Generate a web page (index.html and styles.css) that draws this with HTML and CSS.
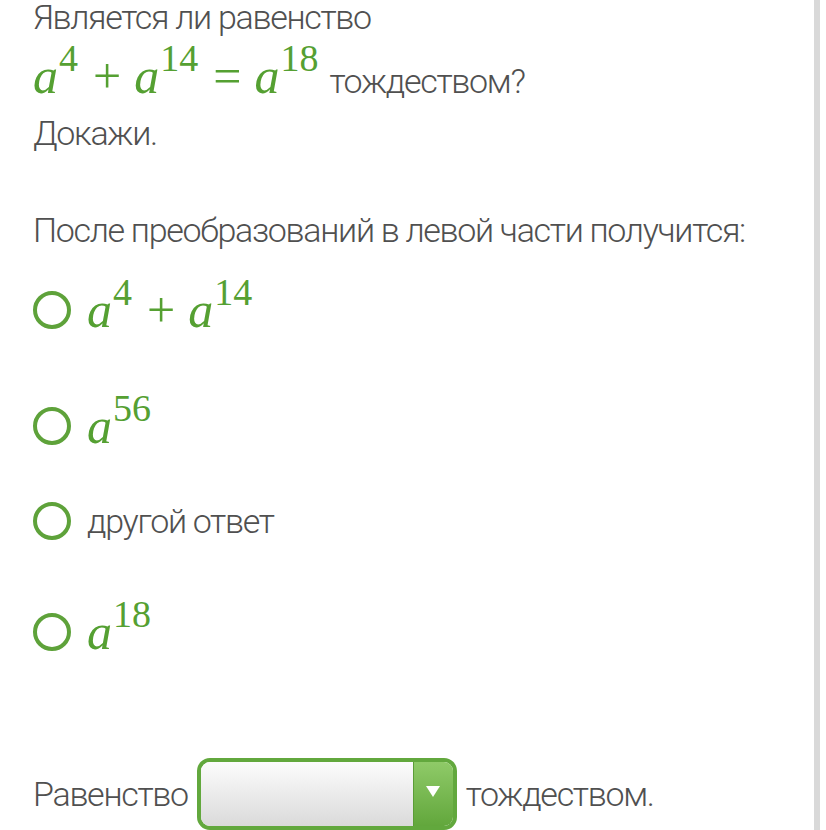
FILE: index.html
```html
<!DOCTYPE html>
<html lang="ru">
  <head>
    <meta charset="UTF-8" />
    <meta name="viewport" content="width=device-width, initial-scale=1.0" />
    <title>Тождество</title>
    <link rel="stylesheet" href="styles.css">
  </head>
  <body>
    <div class="page">
      <div class="task">
        <div class="line first">Является ли равенство</div>
        <div class="line formula">
          <span class="math"><i>a</i><sup>4</sup><span class="op">+</span><i>a</i><sup>14</sup><span class="op">=</span><i>a</i><sup>18</sup></span>
          тождеством?
        </div>
        <div class="line">Докажи.</div>
      </div>

      <div class="line prompt">После преобразований в левой части получится:</div>

      <!-- answer options -->
      <div class="options">
        <label class="opt opt-1">
          <span class="radio"></span>
          <span class="math"><i>a</i><sup>4</sup><span class="op">+</span><i>a</i><sup>14</sup></span>
        </label>
        <label class="opt opt-2">
          <span class="radio"></span>
          <span class="math"><i>a</i><sup>56</sup></span>
        </label>
        <label class="opt opt-3">
          <span class="radio"></span>
          <span class="opt-text">другой ответ</span>
        </label>
        <label class="opt opt-4">
          <span class="radio"></span>
          <span class="math"><i>a</i><sup>18</sup></span>
        </label>
      </div>

      <div class="answer">
        <span>Равенство</span>
        <div class="select">
          <div class="select-value"></div>
          <div class="select-btn"><span class="arrow"></span></div>
        </div>
        <span>тождеством.</span>
      </div>
    </div>
  </body>
</html>
```

FILE: styles.css
```css
/* Reset */
* {
  box-sizing: border-box;
  margin: 0;
  padding: 0;
}

body {
  background: #fff;
  font-family: "Roboto", "Liberation Sans", sans-serif;
  font-weight: 300;
  color: #505050;
  letter-spacing: -1.3px;
  overflow: hidden;
}

/* Page column with the grey rail on the right */
.page {
  width: 820px;
  height: 830px;
  padding-left: 33px;
  border-right: 6px solid #d9d9d9;
}

.line {
  font-size: 34px;
  line-height: 52px;
  white-space: nowrap;
}

.line.first {
  line-height: 34px;
}

.line.formula {
  height: 73px;
  padding-top: 22px;
  line-height: 40px;
}

/* Math */
.math {
  font-family: "Liberation Serif", "Times New Roman", serif;
  font-weight: 400;
  font-size: 50px;
  letter-spacing: 0;
  color: #55a032;
}

.math i {
  font-style: italic;
}

.math sup {
  font-size: 38px;
  line-height: 0;
  position: relative;
  top: -0.58em;
  margin-left: 1px;
  vertical-align: baseline;
}

.math .op {
  margin: 0 13px 0 15px;
}

.formula .math {
  margin-right: 4px;
}

.prompt {
  margin-top: 45px;
}

/* Options */
.options {
  display: flex;
  flex-direction: column;
  margin-top: 24px;
}

.opt {
  display: flex;
  align-items: center;
  gap: 16px;
  height: 60px;
}

.opt-2 {
  margin-top: 56px;
}

.opt-3 {
  margin-top: 35px;
}

.opt-4 {
  margin-top: 51px;
}

.radio {
  width: 38px;
  height: 38px;
  border: 4px solid #5ea23a;
  border-radius: 50%;
  flex-shrink: 0;
}

.opt .math {
  line-height: 60px;
}

.opt-text {
  font-size: 34px;
}

/* Fill-in sentence with dropdown */
.answer {
  display: flex;
  align-items: center;
  gap: 9px;
  margin-top: 96px;
  font-size: 34px;
}

.select {
  display: flex;
  width: 260px;
  height: 72px;
  border: 4px solid #62a83d;
  border-radius: 13px;
  overflow: hidden;
}

.select-value {
  flex: 1;
  background: linear-gradient(#fcfcfc, #dadada);
}

.select-btn {
  width: 40px;
  display: flex;
  align-items: center;
  justify-content: center;
  background: linear-gradient(#8fca68, #62a73c);
  border-left: 1px solid #5b9d37;
}

.arrow {
  width: 0;
  height: 0;
  border-left: 7px solid transparent;
  border-right: 7px solid transparent;
  border-top: 11px solid #fff;
  margin-top: -6px;
}
```
